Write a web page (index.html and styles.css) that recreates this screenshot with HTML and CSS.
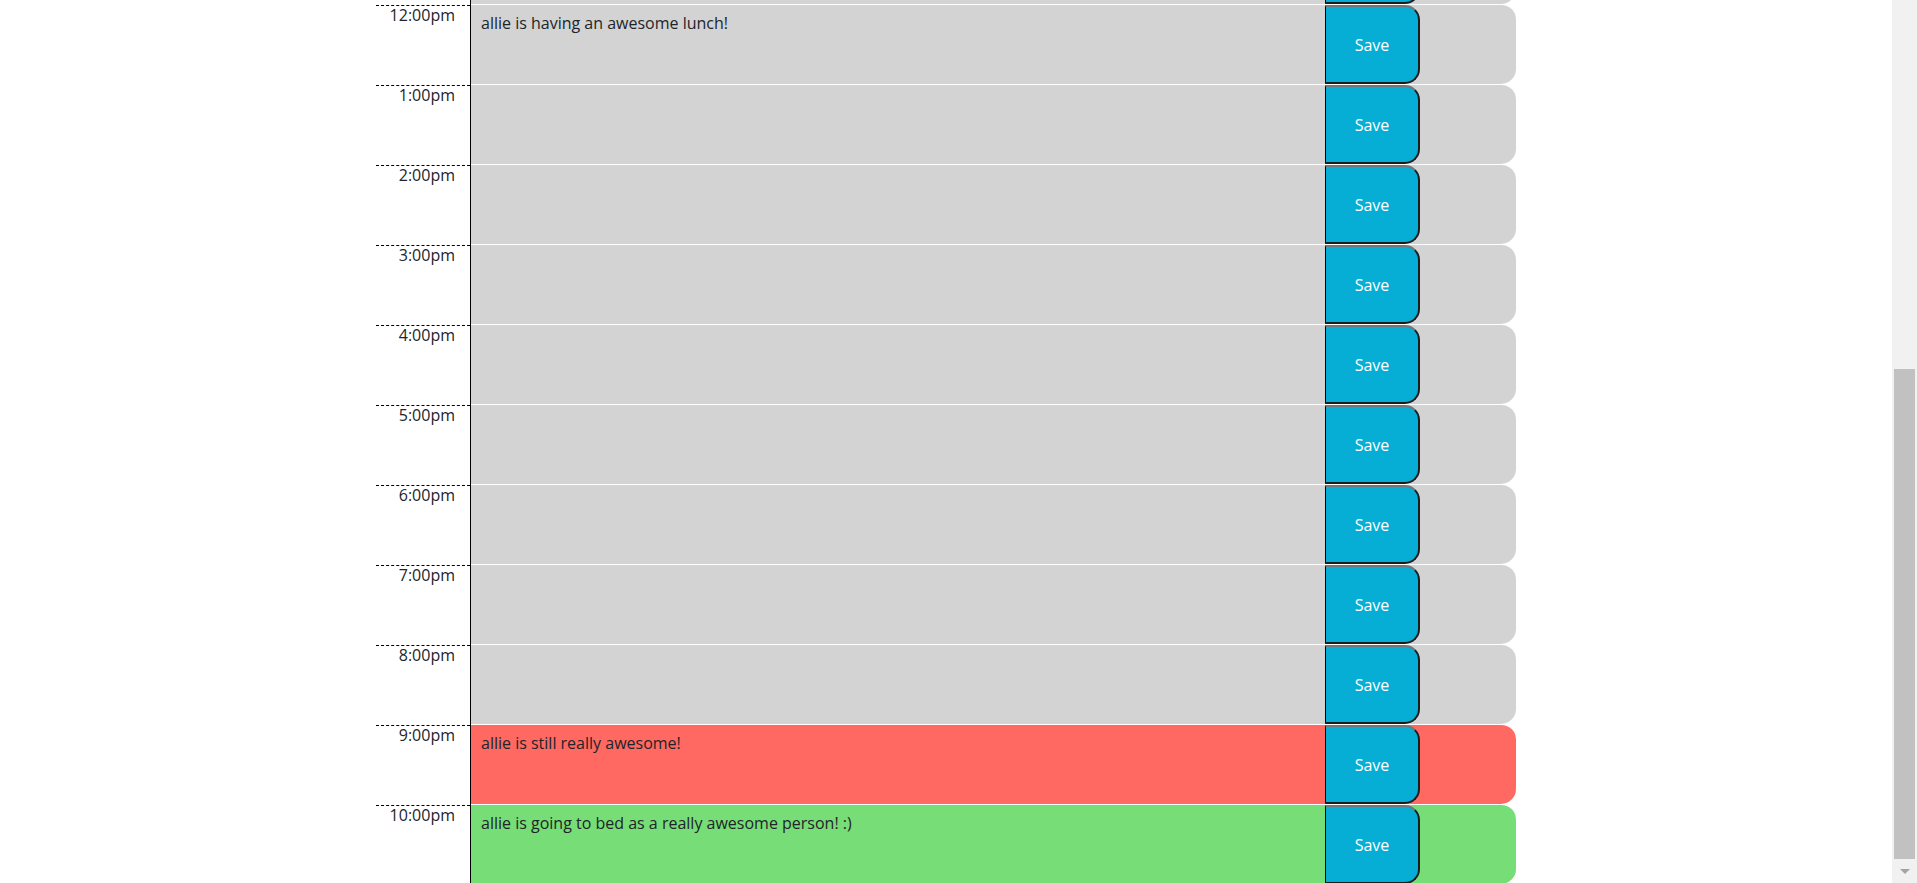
FILE: index.html
```html
<!DOCTYPE html>
<html lang="en">
<head>
<meta charset="utf-8">
<title>Work Day Scheduler</title>
<link rel="stylesheet" href="styles.css">
</head>
<body>
<div class="page">
  <main class="viewport">
    <div class="container">
      <div class="row">
        <div class="hour"><div class="hour-label"></div></div>
        <div class="block past"><textarea class="desc" aria-label="11:00am"></textarea><button class="save-btn" aria-label="Save"></button></div>
      </div>
      <div class="row">
        <div class="hour"><div class="hour-label">12:00pm</div></div>
        <div class="block past"><textarea class="desc">allie is having an awesome lunch!</textarea><button class="save-btn">Save</button></div>
      </div>
      <div class="row">
        <div class="hour"><div class="hour-label">1:00pm</div></div>
        <div class="block past"><textarea class="desc"></textarea><button class="save-btn">Save</button></div>
      </div>
      <div class="row">
        <div class="hour"><div class="hour-label">2:00pm</div></div>
        <div class="block past"><textarea class="desc"></textarea><button class="save-btn">Save</button></div>
      </div>
      <div class="row">
        <div class="hour"><div class="hour-label">3:00pm</div></div>
        <div class="block past"><textarea class="desc"></textarea><button class="save-btn">Save</button></div>
      </div>
      <div class="row">
        <div class="hour"><div class="hour-label">4:00pm</div></div>
        <div class="block past"><textarea class="desc"></textarea><button class="save-btn">Save</button></div>
      </div>
      <div class="row">
        <div class="hour"><div class="hour-label">5:00pm</div></div>
        <div class="block past"><textarea class="desc"></textarea><button class="save-btn">Save</button></div>
      </div>
      <div class="row">
        <div class="hour"><div class="hour-label">6:00pm</div></div>
        <div class="block past"><textarea class="desc"></textarea><button class="save-btn">Save</button></div>
      </div>
      <div class="row">
        <div class="hour"><div class="hour-label">7:00pm</div></div>
        <div class="block past"><textarea class="desc"></textarea><button class="save-btn">Save</button></div>
      </div>
      <div class="row">
        <div class="hour"><div class="hour-label">8:00pm</div></div>
        <div class="block past"><textarea class="desc"></textarea><button class="save-btn">Save</button></div>
      </div>
      <div class="row">
        <div class="hour"><div class="hour-label">9:00pm</div></div>
        <div class="block present"><textarea class="desc">allie is still really awesome!</textarea><button class="save-btn">Save</button></div>
      </div>
      <div class="row">
        <div class="hour"><div class="hour-label">10:00pm</div></div>
        <div class="block future"><textarea class="desc">allie is going to bed as a really awesome person! :)</textarea><button class="save-btn">Save</button></div>
      </div>
    </div>
  </main>
  <div class="scrollbar">
    <div class="scroll-track"></div>
    <div class="scroll-thumb"></div>
    <div class="scroll-arrow"><span class="arrow-down"></span></div>
  </div>
</div>
</body>
</html>
```

FILE: styles.css
```css
html, body {
  margin: 0;
  height: 883px;
  overflow: hidden;
}

body {
  font-family: "Open Sans", "DejaVu Sans", sans-serif;
  font-size: 16px;
  color: #212529;
  background: #fff;
}

.page {
  display: flex;
  height: 100%;
}

.viewport {
  flex: 1;
  min-width: 0;
}

.container {
  width: 1140px;
  margin: -76px auto 0;
}

.row {
  display: flex;
  height: 80px;
}

.hour {
  width: 95px;
  flex: none;
  box-sizing: border-box;
  border-right: 1px solid #000;
  padding-top: 1px;
}

.hour-label {
  border-top: 1px dashed #000;
  text-align: right;
  padding-right: 15px;
  line-height: 18px;
  min-height: 18px;
}

.block {
  flex: 1;
  display: flex;
  border-top: 1px solid #fff;
  border-radius: 0 15px 15px 0;
}

.past { background: #d3d3d3; }
.present { background: #ff6961; }
.future { background: #77dd77; }

.desc {
  width: 854px;
  flex: none;
  box-sizing: border-box;
  margin: 0;
  padding: 6px 10px;
  border: 0;
  background: transparent;
  resize: none;
  outline: none;
  font: inherit;
  line-height: 1.5;
  color: inherit;
  overflow: hidden;
}

.save-btn {
  width: 95px;
  flex: none;
  box-sizing: border-box;
  margin: 0;
  padding: 0;
  background: #06aed5;
  color: #fff;
  font: inherit;
  border-style: solid;
  border-width: 2px 2px 2px 1px;
  border-color: #767676 #1d1d1d #1d1d1d #000;
  border-radius: 0 15px 15px 0;
}

.scrollbar {
  width: 25px;
  flex: none;
  display: flex;
  flex-direction: column;
  background: #f1f1f1;
}

.scroll-track {
  height: 369px;
}

.scroll-thumb {
  height: 490px;
  margin: 0 2px;
  background: #c1c1c1;
}

.scroll-arrow {
  flex: 1;
  display: flex;
  align-items: center;
  justify-content: center;
}

.arrow-down {
  width: 0;
  height: 0;
  border-left: 5px solid transparent;
  border-right: 5px solid transparent;
  border-top: 5px solid #a3a3a3;
}
```
